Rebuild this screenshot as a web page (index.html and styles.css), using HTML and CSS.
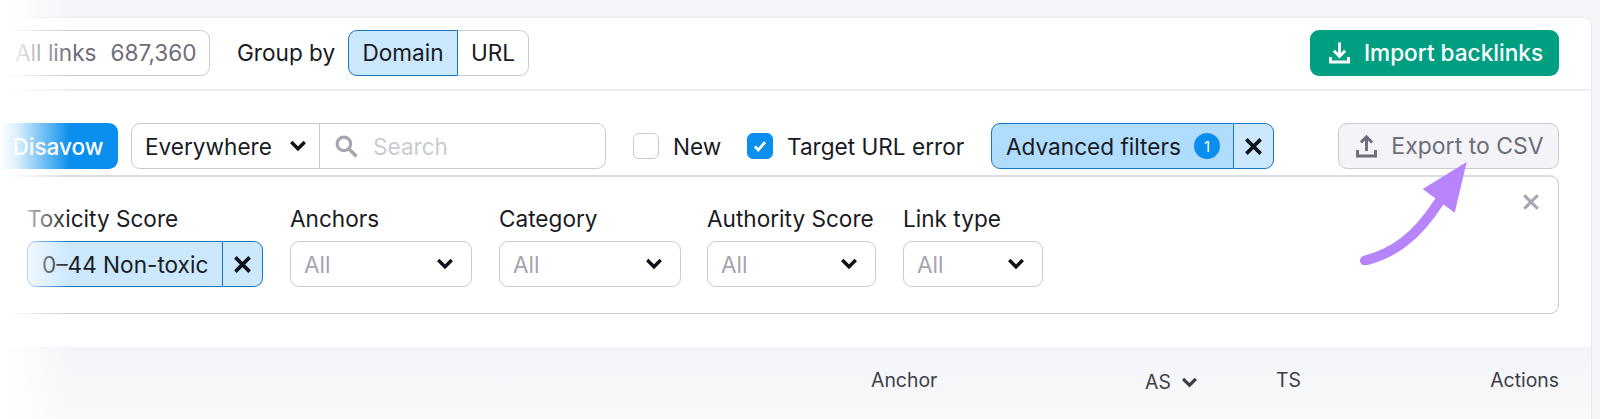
FILE: index.html
```html
<!DOCTYPE html>
<html lang="en">
<head>
<meta charset="utf-8">
<title>Backlink Audit</title>
<link rel="stylesheet" href="styles.css">
</head>
<body>
<div class="page">
  <div class="card">
    <div class="topbar">
      <div class="links-box"><span class="links-label">All links</span><span class="links-count">687,360</span></div>
      <span class="group-label">Group by</span>
      <div class="toggle">
        <span class="toggle-on">Domain</span>
        <span class="toggle-off">URL</span>
      </div>
      <button class="btn-import">
        <svg class="ico-btn" viewBox="0 0 24 24"><path d="M12 3v12M7 10.500l5 5 5-5M4 16v4.500h16V16" fill="none" stroke="#fff" stroke-width="2.600"/></svg>
        Import backlinks
      </button>
    </div>

    <div class="toolbar">
      <button class="btn-disavow">Disavow</button>
      <div class="search-group">
        <div class="scope">Everywhere
          <svg class="chev" viewBox="0 0 16 16"><path d="M2 4.500l6 6 6-6" fill="none" stroke="#10121a" stroke-width="3"/></svg>
        </div>
        <div class="search">
          <svg class="ico-search" viewBox="0 0 24 24"><circle cx="9.500" cy="9.500" r="6.500" fill="none" stroke="#a4a6b1" stroke-width="3"/><path d="M14.500 14.500l7 7" stroke="#a4a6b1" stroke-width="3.400"/></svg>
          <span class="placeholder">Search</span>
        </div>
      </div>
      <label class="check check-new"><span class="box"></span>New</label>
      <label class="check check-target"><span class="box box-on"><svg viewBox="0 0 16 16"><path d="M3.500 8.500l3 3 6-7" fill="none" stroke="#fff" stroke-width="2.400"/></svg></span>Target URL error</label>
      <div class="adv">
        <span class="adv-main">Advanced filters <span class="badge">1</span></span>
        <span class="adv-x"><svg class="ico-x" viewBox="0 0 16 16"><path d="M2 2l12 12M14 2L2 14" stroke="#10121a" stroke-width="3"/></svg></span>
      </div>
      <button class="btn-export">
        <svg class="ico-btn" viewBox="0 0 24 24"><path d="M12 16V4M7 8.500l5-5 5 5M4 15v5.500h16V15" fill="none" stroke="#6c6e79" stroke-width="2.600"/></svg>
        Export to CSV
      </button>
    </div>

    <div class="panel">
      <div class="field field-tox">
        <span class="field-label">Toxicity Score</span>
        <div class="tox">
          <span class="tox-main">0–44 Non-toxic</span>
          <span class="tox-x"><svg class="ico-x" viewBox="0 0 16 16"><path d="M2 2l12 12M14 2L2 14" stroke="#10121a" stroke-width="3"/></svg></span>
        </div>
      </div>
      <div class="field field-anchors">
        <span class="field-label">Anchors</span>
        <div class="select"><span>All</span><svg class="chev" viewBox="0 0 16 16"><path d="M2 4.500l6 6 6-6" fill="none" stroke="#10121a" stroke-width="3"/></svg></div>
      </div>
      <div class="field field-category">
        <span class="field-label">Category</span>
        <div class="select"><span>All</span><svg class="chev" viewBox="0 0 16 16"><path d="M2 4.500l6 6 6-6" fill="none" stroke="#10121a" stroke-width="3"/></svg></div>
      </div>
      <div class="field field-authority">
        <span class="field-label">Authority Score</span>
        <div class="select"><span>All</span><svg class="chev" viewBox="0 0 16 16"><path d="M2 4.500l6 6 6-6" fill="none" stroke="#10121a" stroke-width="3"/></svg></div>
      </div>
      <div class="field field-link">
        <span class="field-label">Link type</span>
        <div class="select"><span>All</span><svg class="chev" viewBox="0 0 16 16"><path d="M2 4.500l6 6 6-6" fill="none" stroke="#10121a" stroke-width="3"/></svg></div>
      </div>
      <svg class="panel-close" viewBox="0 0 16 16"><path d="M2 2l12 12M14 2L2 14" stroke="#a4a6b1" stroke-width="2.800"/></svg>
    </div>

    <div class="thead">
      <span class="th-anchor">Anchor</span>
      <span class="th-as">AS <svg class="chev-sm" viewBox="0 0 16 16"><path d="M2 4.500l6 6 6-6" fill="none" stroke="#3c3e48" stroke-width="3"/></svg></span>
      <span class="th-ts">TS</span>
      <span class="th-actions">Actions</span>
    </div>
  </div>
  <div class="fade"></div>
  <svg class="arrow" viewBox="0 0 110 105">
    <path d="M5 100.500C32 94 56 78 79 42" fill="none" stroke="#b784fb" stroke-width="10" stroke-linecap="round"/>
    <path d="M106.700 2L62.700 29L94.700 52.700Z" fill="#b784fb"/>
  </svg>
</div>
</body>
</html>
```
FILE: styles.css
```css
* { box-sizing: border-box; }
html, body { margin: 0; padding: 0; }
body { font-family: Inter, "Liberation Sans", sans-serif; color: #191b23; }
button { font: inherit; }

.page {
  position: relative;
  width: 1600px;
  height: 419px;
  overflow: hidden;
  background: #f4f5f9;
  padding: 17px 8px 0 0;
  font-size: 22.6px;
}
.card {
  height: 402px;
  background: #fff;
  border: 1px solid #e8e9ef;
  border-width: 1px 1px 0 0;
  border-top-right-radius: 9px;
  display: flex;
  flex-direction: column;
}

/* top bar */
.topbar {
  height: 73px;
  flex: none;
  display: flex;
  align-items: center;
  padding: 0 32px 2px 0;
  border-bottom: 2px solid #eeeff3;
}
.links-box {
  width: 210px;
  height: 46px;
  display: flex;
  align-items: center;
  gap: 14px;
  padding-left: 15px;
  border: 1px solid #c9cbd3;
  border-left: 0;
  border-radius: 0 9px 9px 0;
  color: #6c6e79;
}
.group-label { margin: 0 13px 0 27px; width: 98px; white-space: nowrap; }
.toggle { display: flex; height: 46px; }
.toggle-on {
  width: 110px;
  display: flex;
  align-items: center;
  justify-content: center;
  background: #cce8fd;
  border: 1px solid #1a74c4;
  border-radius: 9px 0 0 9px;
}
.toggle-off {
  width: 71px;
  display: flex;
  align-items: center;
  justify-content: center;
  border: 1px solid #c9cbd3;
  border-left: 0;
  border-radius: 0 9px 9px 0;
}
.btn-import {
  margin-left: auto;
  width: 249px;
  height: 46px;
  display: flex;
  align-items: center;
  justify-content: center;
  gap: 11px;
  padding: 0;
  border: 0;
  border-radius: 9px;
  background: #009f81;
  color: #fff;
  font-weight: 500;
}
.ico-btn { width: 27px; height: 27px; flex: none; }

/* toolbar */
.toolbar {
  display: flex;
  align-items: center;
  height: 46px;
  margin-top: 32px;
  padding-right: 32px;
  flex: none;
}
.btn-disavow {
  width: 118px;
  height: 46px;
  padding: 0 2px 0 0;
  border: 0;
  border-radius: 0 9px 9px 0;
  background: #0a8fee;
  color: #fff;
  font-weight: 500;
}
.search-group {
  margin-left: 13px;
  width: 475px;
  height: 46px;
  display: flex;
  border: 1px solid #c9cbd3;
  border-radius: 9px;
}
.scope {
  width: 188px;
  flex: none;
  display: flex;
  align-items: center;
  justify-content: space-between;
  padding: 0 12px 0 13px;
  border-right: 1px solid #c9cbd3;
}
.chev { width: 18px; height: 18px; flex: none; }
.search { display: flex; align-items: center; gap: 14px; padding-left: 14px; }
.ico-search { width: 25px; height: 25px; }
.placeholder { color: #c9cbd3; }
.check { display: flex; align-items: center; gap: 14px; white-space: nowrap; }
.check-new { margin-left: 27px; width: 114px; }
.check-target { width: 244px; }
.box {
  width: 26px;
  height: 26px;
  flex: none;
  border: 1px solid #c9cbd3;
  border-radius: 6px;
  display: flex;
  align-items: center;
  justify-content: center;
}
.box-on { background: #0a8fee; border-color: #0a8fee; }
.box-on svg { width: 18px; height: 18px; }
.adv { display: flex; height: 46px; width: 283px; }
.adv-main {
  width: 243px;
  display: flex;
  align-items: center;
  justify-content: space-between;
  padding: 0 13px 0 14px;
  background: #b0dcfd;
  border: 1px solid #1a74c4;
  border-radius: 9px 0 0 9px;
}
.badge {
  width: 26px;
  height: 26px;
  border-radius: 50%;
  background: #0a8fee;
  color: #fff;
  font-size: 15px;
  display: flex;
  align-items: center;
  justify-content: center;
}
.adv-x {
  flex: 1;
  display: flex;
  align-items: center;
  justify-content: center;
  background: #cce8fd;
  border: 1px solid #1a74c4;
  border-left: 0;
  border-radius: 0 9px 9px 0;
}
.ico-x { width: 19px; height: 19px; }
.btn-export {
  margin-left: auto;
  width: 221px;
  height: 46px;
  display: flex;
  align-items: center;
  justify-content: center;
  gap: 11px;
  padding: 0;
  border: 1px solid #c9cbd3;
  border-radius: 9px;
  background: #f4f4f8;
  color: #6c6e79;
  font-size: 23px;
}

/* filters panel */
.panel {
  position: relative;
  flex: none;
  height: 139px;
  margin: 6px 32px 0 0;
  padding: 27px 0 0 27px;
  display: flex;
  border: 1px solid #c9cbd3;
  border-top: 2px solid #dcdde3;
  border-left: 0;
  border-radius: 0 9px 9px 0;
}
.field { display: flex; flex-direction: column; gap: 8px; flex: none; }
.field-label { height: 29px; line-height: 29px; white-space: nowrap; }
.field-tox { width: 236px; margin-right: 27px; }
.field-anchors { width: 182px; margin-right: 27px; }
.field-category { width: 182px; margin-right: 26px; }
.field-authority { width: 169px; margin-right: 27px; }
.field-link { width: 140px; }
.tox { display: flex; height: 46px; }
.tox-main {
  width: 196px;
  display: flex;
  align-items: center;
  padding-left: 14px;
  white-space: nowrap;
  background: #cce8fd;
  border: 1px solid #1a74c4;
  border-radius: 9px 0 0 9px;
}
.tox-x {
  flex: 1;
  display: flex;
  align-items: center;
  justify-content: center;
  background: #cce8fd;
  border: 1px solid #1a74c4;
  border-left: 0;
  border-radius: 0 9px 9px 0;
}
.select {
  height: 46px;
  display: flex;
  align-items: center;
  justify-content: space-between;
  padding: 0 17px 0 13px;
  border: 1px solid #c9cbd3;
  border-radius: 9px;
  color: #a4a6b1;
}
.panel-close {
  position: absolute;
  top: 16px;
  right: 18px;
  width: 18px;
  height: 18px;
}

/* table header */
.thead {
  flex: 1;
  margin-top: 33px;
  display: grid;
  grid-template-columns: 274px 131px 60px 1fr;
  padding: 21px 32px 0 871px;
  background: linear-gradient(#f4f5f9, #f9f9fb);
  font-size: 19.4px;
  color: #3c3e48;
}
.th-anchor, .th-ts, .th-actions { line-height: 24px; height: 24px; }
.th-as {
  display: flex;
  align-items: center;
  gap: 10px;
  height: 24px;
  margin-top: 2px;
}
.chev-sm { width: 17px; height: 17px; }
.th-actions { text-align: right; }

/* overlays */
.fade {
  position: absolute;
  left: 0;
  top: 0;
  width: 70px;
  height: 419px;
  background: linear-gradient(90deg, #fff 0%, rgba(255, 255, 255, .85) 25%, rgba(255, 255, 255, 0) 100%);
}
.arrow {
  position: absolute;
  left: 1360px;
  top: 160px;
  width: 110px;
  height: 105px;
}
```
